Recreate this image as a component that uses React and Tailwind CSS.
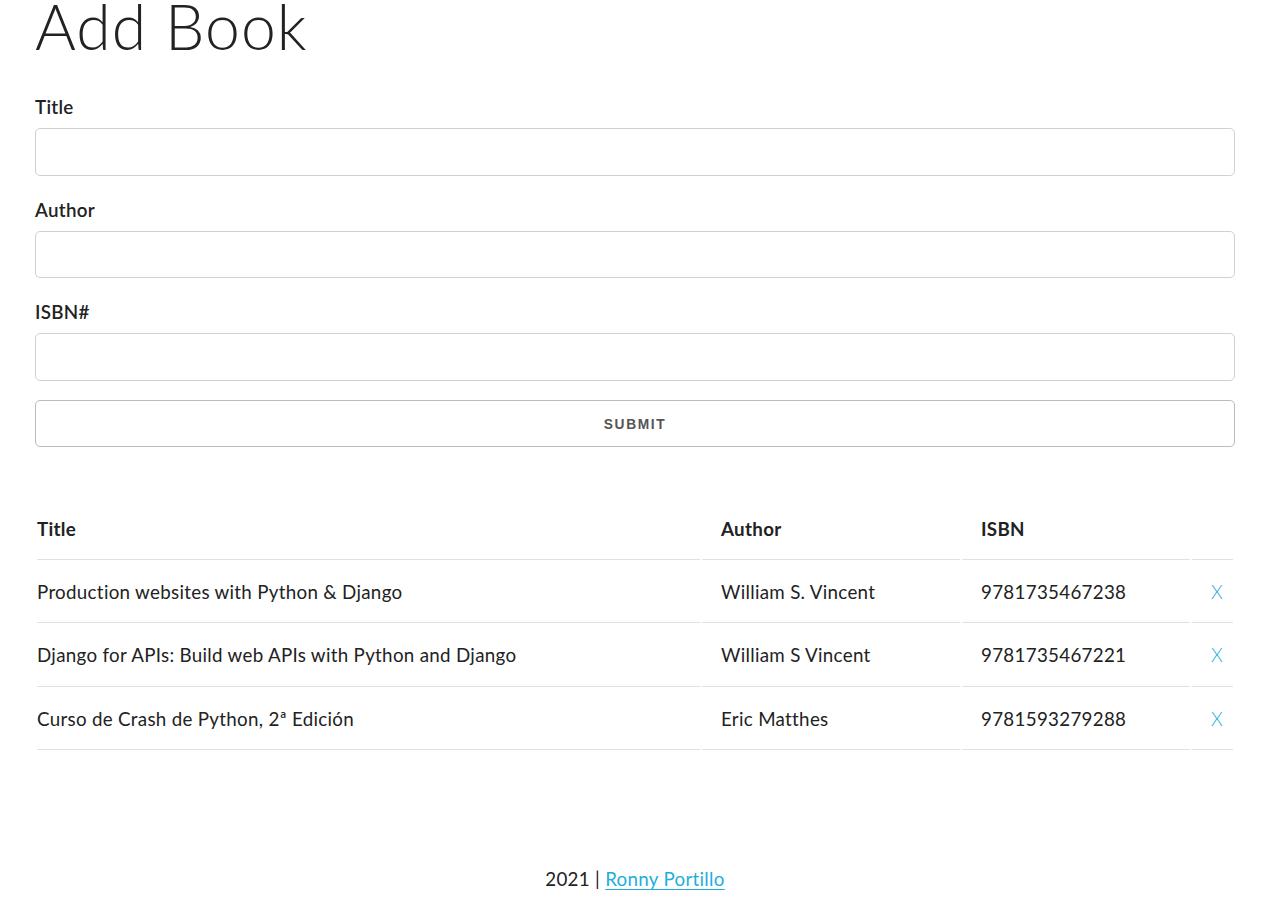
const books = [
  { title: 'Production websites with Python & Django', author: 'William S. Vincent', isbn: '9781735467238' },
  { title: 'Django for APIs: Build web APIs with Python and Django', author: 'William S Vincent', isbn: '9781735467221' },
  { title: 'Curso de Crash de Python, 2ª Edición', author: 'Eric Matthes', isbn: '9781593279288' },
]

function Field({ label }) {
  return (
    <div>
      <label className="block font-semibold leading-[30px] mb-[6.25px]">{label}</label>
      <input
        type="text"
        className="block w-full h-[47.5px] border border-[#d1d1d1] rounded-[5px] px-3 mb-[18.75px] outline-none bg-white"
      />
    </div>
  )
}

export default function App() {
  return (
    <div className="min-h-screen bg-white text-[#222] text-[18.75px] leading-[30px] tracking-[0.3px] font-['Lato','Open_Sans',sans-serif]">
      <div className="w-[1200px] ml-[35px]">
        <h1 className="text-[62.5px] font-light leading-[51px] mb-[41px] tracking-[1px]">Add Book</h1>

        <form onSubmit={e => e.preventDefault()}>
          <Field label="Title" />
          <Field label="Author" />
          <Field label="ISBN#" />
          <button
            type="submit"
            className="block w-full h-[47px] pt-[4px] border border-[#bbb] rounded-[5px] bg-transparent text-[#555] text-[13.75px] font-bold tracking-[1.6px] uppercase font-['Liberation_Sans',Arial,sans-serif]"
          >
            Submit
          </button>
        </form>

        <table className="w-[1200px] mt-[50px] border-separate border-spacing-[2px] table-fixed">
          <thead>
            <tr>
              <th className="w-[663px] text-left font-bold py-[15.2px] pl-0 border-b border-[#e1e1e1]">Title</th>
              <th className="w-[258px] text-left font-bold py-[15.2px] px-[19px] border-b border-[#e1e1e1]">Author</th>
              <th className="w-[228px] text-left font-bold py-[15.2px] px-[19px] border-b border-[#e1e1e1]">ISBN</th>
              <th className="w-[41px] py-[15.2px] border-b border-[#e1e1e1]"></th>
            </tr>
          </thead>
          <tbody>
            {books.map(b => (
              <tr key={b.isbn}>
                <td className="py-[15.2px] pl-0 border-b border-[#e1e1e1]">{b.title}</td>
                <td className="py-[15.2px] px-[19px] border-b border-[#e1e1e1]">{b.author}</td>
                <td className="py-[15.2px] px-[19px] border-b border-[#e1e1e1]">{b.isbn}</td>
                <td className="py-[15.2px] pl-[19px] border-b border-[#e1e1e1]">
                  <a href="#" className="text-[#1eaedb] font-light">X</a>
                </td>
              </tr>
            ))}
          </tbody>
        </table>

        <footer className="text-center mt-[112px] pb-[4px]">
          2021 | <a href="#" className="text-[#1eaedb] underline underline-offset-[3px]">Ronny Portillo</a>
        </footer>
      </div>
    </div>
  )
}
